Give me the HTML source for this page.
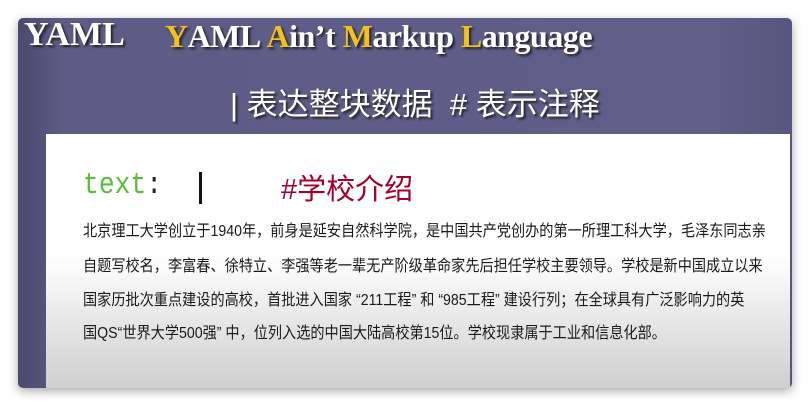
<!DOCTYPE html>
<html><head><meta charset="utf-8"><style>
*{margin:0;padding:0;box-sizing:border-box}
body{width:810px;height:408px;background:#fff;position:relative;overflow:hidden;font-family:"Liberation Sans","Noto Sans CJK SC",sans-serif}
.card{position:absolute;left:18px;top:18px;width:774px;height:370px;border-radius:5px;background:linear-gradient(90deg,#4a4a6e 0,#5c5c86 6%,#5e5e88 90%,#56567e 100%);box-shadow:0 3px 10px rgba(0,0,0,.35)}
.y1{position:absolute;left:6px;top:-2px;font:bold 34px "Liberation Serif",serif;color:#fff;text-shadow:2px 2px 2px #222;transform:scaleX(1.0);transform-origin:0 0}
.y2{position:absolute;left:147px;top:0px;font:bold 32px "Liberation Serif",serif;color:#fff;text-shadow:2px 2px 2px #222;letter-spacing:-0.5px}
.y2 b{color:#f2c21a}
.h2{position:absolute;left:212px;top:61px;font-size:31px;color:#fff;text-shadow:2px 2px 2px #222;white-space:nowrap}
.panel{position:absolute;left:28px;top:116px;width:744px;height:254px;background:linear-gradient(180deg,#fff 0,#fff 48%,#cfcfcf 100%)}
.t{position:absolute;left:37px;top:34px;font:31px "Liberation Mono",monospace;color:#5dbb3a;transform:scaleX(0.85);transform-origin:0 0}
.t span{color:#222}
.bar{position:absolute;left:153px;top:38px;width:3px;height:32px;background:#111}
.c{position:absolute;left:235px;top:32px;font-size:29px;color:#a4002e}
.p{position:absolute;left:37px;font-size:16px;color:#1a1a1a;white-space:nowrap;height:20px;line-height:20px;transform-origin:0 0;transform:scaleX(0.885)}
</style></head><body>
<div class="card">
<div class="y1">YAML</div>
<div class="y2"><b>Y</b>AML <b>A</b>in’t <b>M</b>arkup <b>L</b>anguage</div>
<div class="h2">| 表达整块数据 &nbsp;# 表示注释</div>
<div class="panel">
<div class="t">text<span>:</span></div>
<div class="bar"></div>
<div class="c">#学校介绍</div>
<div class="p" style="top:88px">北京理工大学创立于1940年，前身是延安自然科学院，是中国共产党创办的第一所理工科大学，毛泽东同志亲</div>
<div class="p" style="top:123px">自题写校名，李富春、徐特立、李强等老一辈无产阶级革命家先后担任学校主要领导。学校是新中国成立以来</div>
<div class="p" style="top:157px">国家历批次重点建设的高校，首批进入国家 “211工程” 和 “985工程” 建设行列；在全球具有广泛影响力的英</div>
<div class="p" style="top:190px">国QS“世界大学500强” 中，位列入选的中国大陆高校第15位。学校现隶属于工业和信息化部。</div>
</div>
</div>
</body></html>
